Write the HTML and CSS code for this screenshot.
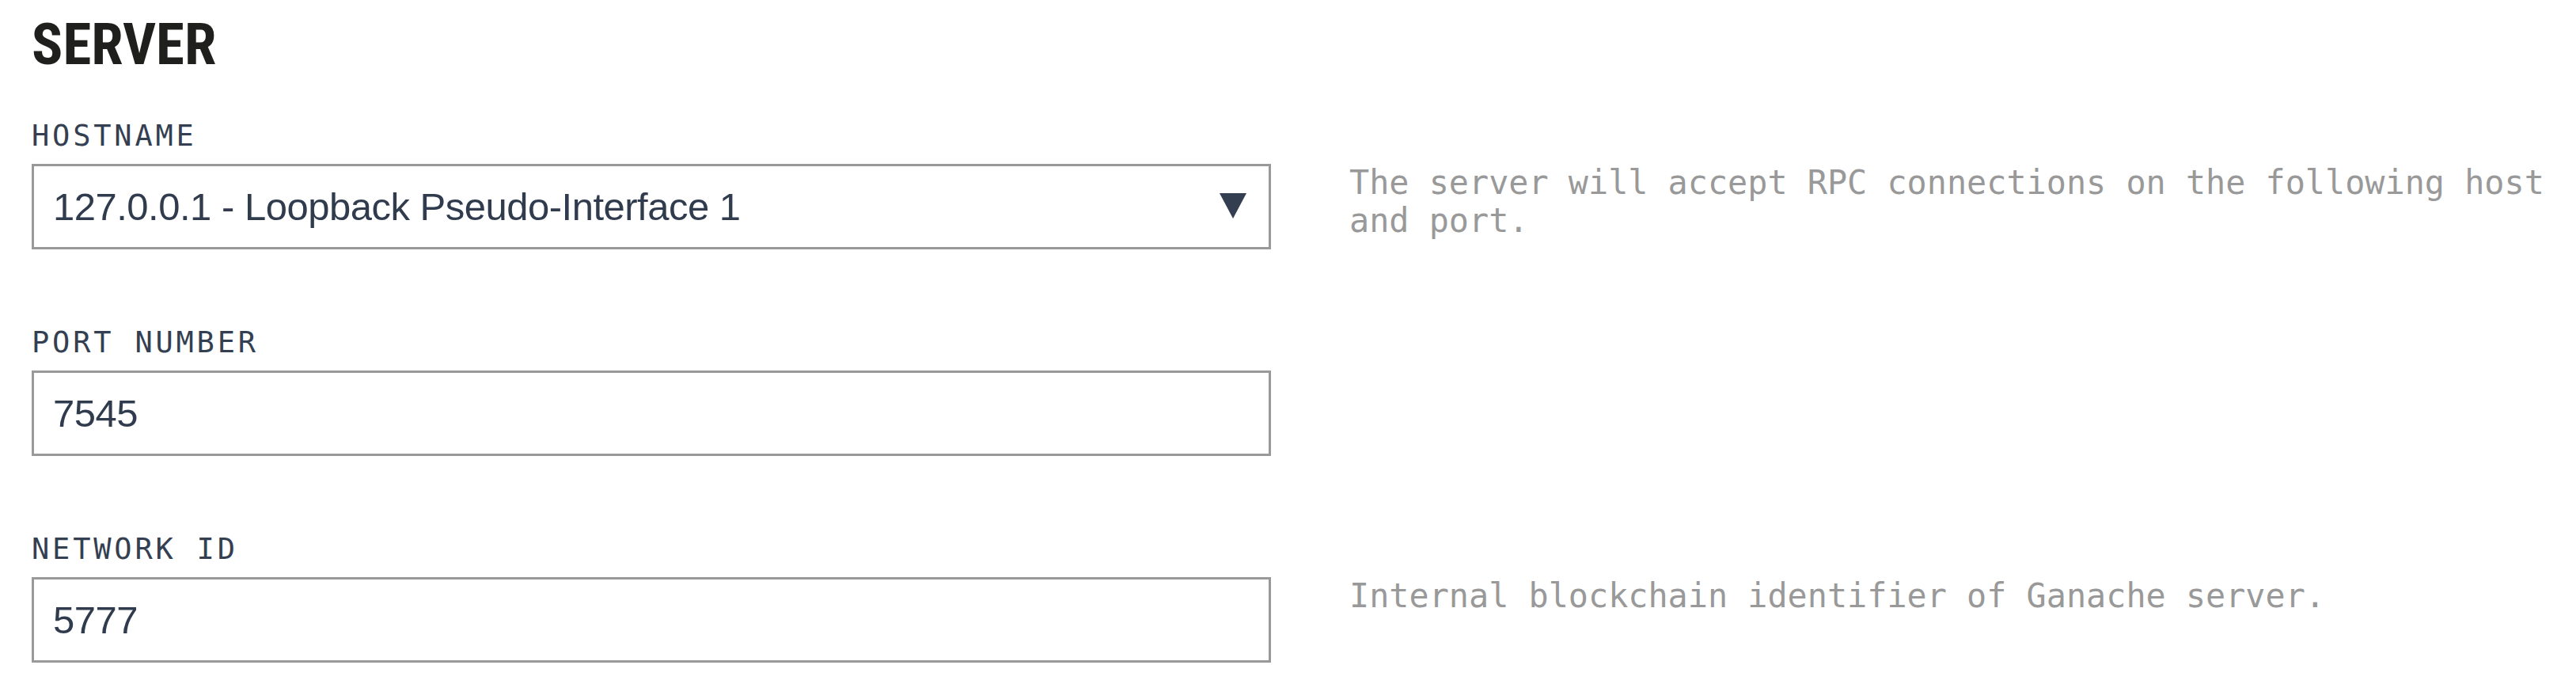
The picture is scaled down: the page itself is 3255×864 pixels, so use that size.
FILE: index.html
```html
<!DOCTYPE html>
<html lang="en">
<head>
<meta charset="utf-8">
<title>Server settings</title>
<link rel="stylesheet" href="styles.css">
</head>
<body>
<main class="settings">
  <h1 class="section-title">SERVER</h1>
  <div class="rows">
    <div class="row">
      <div class="field">
        <div class="field-label">HOSTNAME</div>
        <div class="select">
          <span class="value">127.0.0.1 - Loopback Pseudo-Interface 1</span>
          <svg class="caret" width="34" height="32" viewBox="0 0 34 32"><polygon points="0,0 34,0 17,32" fill="#333e50"/></svg>
        </div>
      </div>
      <p class="help">The server will accept RPC connections on the following host and port.</p>
    </div>
    <div class="row">
      <div class="field">
        <div class="field-label">PORT NUMBER</div>
        <div class="input"><span class="value">7545</span></div>
      </div>
      <p class="help"></p>
    </div>
    <div class="row">
      <div class="field">
        <div class="field-label">NETWORK ID</div>
        <div class="input"><span class="value">5777</span></div>
      </div>
      <p class="help">Internal blockchain identifier of Ganache server.</p>
    </div>
  </div>
</main>
</body>
</html>
```
FILE: styles.css
```css
html, body {
  margin: 0;
  padding: 0;
  background: #ffffff;
}

.settings {
  padding: 0 0 0 40px;
}

.section-title {
  margin: 0 0 57px 0;
  padding-top: 20px;
  font-family: "Roboto Condensed", Roboto, sans-serif;
  font-stretch: condensed;
  font-weight: 700;
  font-size: 73px;
  line-height: 73px;
  color: #1f1f1d;
}

.rows {
  display: flex;
  flex-direction: column;
  gap: 96px;
}

.row {
  display: grid;
  grid-template-columns: 1566px 1fr;
  column-gap: 99px;
}

.field-label {
  font-family: "DejaVu Sans Mono", monospace;
  font-size: 37px;
  line-height: 44px;
  letter-spacing: 3.8px;
  color: #343f51;
  margin-bottom: 13px;
}

.select,
.input {
  box-sizing: border-box;
  height: 108px;
  border: 3px solid #999999;
  padding: 0 28px 0 24px;
  display: flex;
  align-items: center;
  justify-content: space-between;
  background: #ffffff;
}

.value {
  font-family: "Liberation Sans", Arial, sans-serif;
  font-size: 49px;
  line-height: 102px;
  letter-spacing: -0.5px;
  color: #303c4e;
  white-space: nowrap;
}

.caret {
  display: block;
  margin-top: -2px;
}

.help {
  margin: 0;
  padding-top: 57px;
  font-family: "DejaVu Sans Mono", monospace;
  font-size: 41.8px;
  line-height: 48px;
  color: #999999;
}
```
